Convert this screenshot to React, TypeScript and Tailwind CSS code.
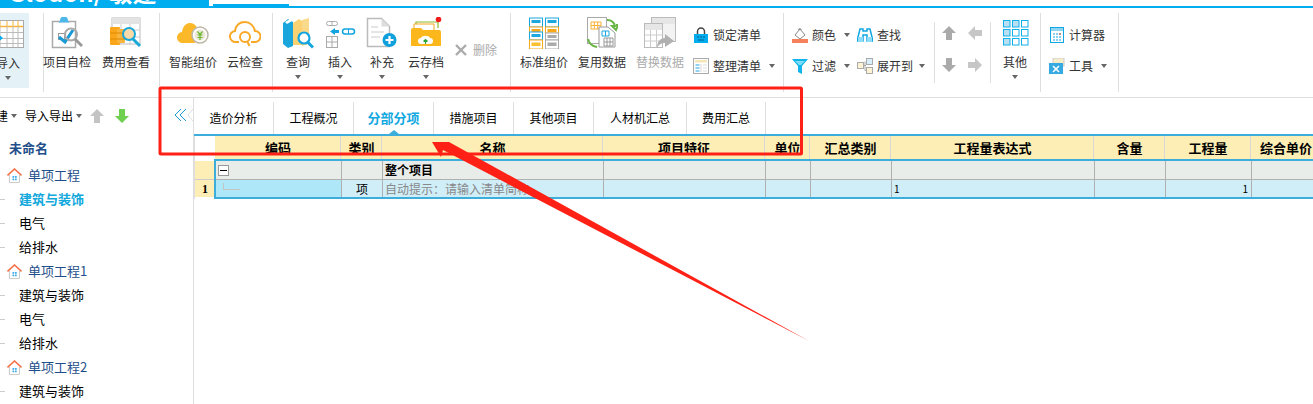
import { ReactNode } from 'react';

const Caret = ({ className = '' }: { className?: string }) => (
  <span className={`inline-block h-0 w-0 border-x-[3.5px] border-t-[4px] border-x-transparent border-t-[#666] ${className}`} />
);

const ImportIcon = () => (
  <svg width="32" height="32" viewBox="0 0 32 32" fill="none">
    <rect x="0.5" y="2.5" width="31" height="27" fill="#fff" stroke="#aaa" />
    <path d="M1 8.5h30" stroke="#f9b233" strokeWidth="1.5" />
    <path d="M1 14.5h30M1 20.5h30M1 25.5h30M8 8v21M15 8v21M21 8v21M26 8v21" stroke="#bbb" />
    <path d="M8 3v5M15 3v5M21 3v5M26 3v5" stroke="#f9b233" />
    <path d="M6 16l5 4-5 4z" fill="#00aeef" />
  </svg>
);

const SelfCheckIcon = () => (
  <svg width="32" height="32" viewBox="0 0 32 32" fill="none">
    <rect x="1.5" y="4.5" width="23" height="26" fill="#fff" stroke="#aaa" strokeWidth="1.5" />
    <path d="M9 3.5a4 4 0 018 0l1.5 2h-11z" fill="#4db8e8" />
    <rect x="7.5" y="16.5" width="6" height="6" stroke="#999" />
    <path d="M8 20l6 5 8-12" stroke="#1a9ad6" strokeWidth="3" />
    <circle cx="20" cy="17.5" r="6" stroke="#aaa" strokeWidth="2" />
    <path d="M24 22l7 7" stroke="#999" strokeWidth="3" />
  </svg>
);

const CostIcon = () => (
  <svg width="32" height="32" viewBox="0 0 32 32" fill="none">
    <rect x="2" y="1" width="28" height="26" fill="#fff" stroke="#bbb" />
    <rect x="2" y="1" width="28" height="6" fill="#e3e3e3" />
    <path d="M2 13h28M2 20h28M11 7v20M20 7v20" stroke="#ccc" />
    <rect x="0" y="10" width="10" height="18" rx="1" fill="#f9a61a" />
    <rect x="7" y="12" width="8" height="14" rx="1" fill="#f7b43e" />
    <path d="M0 16h15M0 22h15" stroke="#e08a00" />
    <circle cx="19" cy="17" r="6" fill="#f9d9a8" stroke="#19a8d8" strokeWidth="2" />
    <path d="M23 22l7 7" stroke="#19a8d8" strokeWidth="3" />
  </svg>
);

const SmartCloudIcon = () => (
  <svg width="32" height="32" viewBox="0 0 32 32" fill="none">
    <path d="M6 26a5.5 5.5 0 01-1-11c1-7 5-9 8-9 4 0 7 3 8 7l-3 13z" fill="#fbb829" />
    <circle cx="23" cy="18" r="8" fill="#fff" stroke="#bdb6a6" strokeWidth="1.5" />
    <circle cx="23" cy="18" r="5.5" fill="#ece7d9" />
    <path d="M20.5 14.5l2.5 3 2.5-3M20.5 18h5M20.5 20.5h5M23 17.5v5.5" stroke="#6ab82c" strokeWidth="1.2" />
  </svg>
);

const CloudCheckIcon = () => (
  <svg width="32" height="32" viewBox="0 0 32 32" fill="none">
    <path d="M10 25H7a5.5 5.5 0 01-1-11c1-6 5-9 10-9 5 0 9 4 10 9a5.5 5.5 0 010 11h-4" stroke="#f9a825" strokeWidth="2" />
    <circle cx="16" cy="20" r="5" stroke="#f9a825" strokeWidth="2" />
    <path d="M18.5 25l2 4" stroke="#f9a825" strokeWidth="2" />
  </svg>
);

const QueryIcon = () => (
  <svg width="32" height="32" viewBox="0 0 32 32" fill="none">
    <path d="M1 6l5-4 5 3v24l-5 2-5-4z" fill="#19a6dd" />
    <path d="M3 5l5-3 2 2-5 3z" fill="#fff" />
    <path d="M11 6l6-4 3 2v24H11z" fill="#fbd271" />
    <path d="M20 3l7-2v26l-7 2z" fill="#f9d98a" />
    <circle cx="22" cy="21" r="5.5" fill="#fff" stroke="#12a5e0" strokeWidth="2.2" />
    <path d="M26 25.5l5 5" stroke="#12a5e0" strokeWidth="3" />
  </svg>
);

const InsertIcon = () => (
  <svg width="32" height="32" viewBox="0 0 32 32" fill="none">
    <rect x="2.5" y="4.5" width="11" height="4" rx="2" stroke="#aaa" />
    <path d="M8 4v5" stroke="#aaa" />
    <rect x="2.5" y="19.5" width="11" height="11" stroke="#aaa" />
    <path d="M2 25h12M8 19v12" stroke="#aaa" />
    <path d="M6 14.5l5-3.5v2h4v3h-4v2z" fill="#12a5e0" />
    <rect x="18.5" y="12" width="12" height="5" rx="2.5" stroke="#12a5e0" strokeWidth="1.5" />
    <path d="M24.5 12v5" stroke="#12a5e0" />
  </svg>
);

const AddDocIcon = () => (
  <svg width="32" height="32" viewBox="0 0 32 32" fill="none">
    <path d="M1.5 1.5h14l8 8v20h-22z" fill="#fff" stroke="#bbb" strokeWidth="1.5" />
    <path d="M15.5 1.5v8h8z" fill="#ddd" />
    <path d="M5 10h7M5 15h13M5 20h9" stroke="#ddd" strokeWidth="1.5" />
    <circle cx="23.5" cy="23" r="7" fill="#10a0dc" />
    <path d="M23.5 19v8M19.5 23h8" stroke="#fff" strokeWidth="2.2" />
  </svg>
);

const CloudSaveIcon = () => (
  <svg width="32" height="32" viewBox="0 0 32 32" fill="none">
    <path d="M6 8V5h22v6" stroke="#8fb82c" strokeWidth="1.2" />
    <path d="M4 11V7h20v6" fill="#fff" stroke="#f5a623" strokeWidth="1" />
    <circle cx="28.5" cy="2.5" r="2.8" fill="#f21b1b" />
    <path d="M1 13a2 2 0 012-2h8l2 2h16a2 2 0 012 2v14H1z" fill="#fbb71c" />
    <path d="M11 27a3 3 0 010-6c1-3 8-3 9 0a3 3 0 010 6z" fill="#fff" />
    <path d="M15.5 27v-4M13.5 24.5l2-2 2 2" stroke="#2ba52b" strokeWidth="1.2" />
  </svg>
);

const StandardIcon = () => (
  <svg width="32" height="32" viewBox="0 0 32 32" fill="none">
    <rect x="1.5" y="1" width="13" height="9" fill="#fff" stroke="#1ca7e0" />
    <rect x="3.5" y="3" width="9" height="3" fill="#1ca7e0" />
    <rect x="1.5" y="10" width="13" height="11" fill="#fff" stroke="#f9a81a" />
    <rect x="3.5" y="12" width="9" height="3" fill="#f9a81a" />
    <rect x="1.5" y="15" width="13" height="8" fill="#fff" stroke="#1ca7e0" />
    <rect x="3.5" y="17" width="9" height="3" fill="#1ca7e0" />
    <rect x="1.5" y="23" width="13" height="9" fill="#fff" stroke="#f9a81a" />
    <rect x="3.5" y="25.5" width="9" height="3.5" fill="#fbc02d" />
    <rect x="17.5" y="1" width="13" height="9" fill="#fff" stroke="#1ca7e0" />
    <rect x="19.5" y="3" width="9" height="3" fill="#1ca7e0" />
    <rect x="17.5" y="10" width="13" height="6" fill="#fff" stroke="#f9a81a" />
    <rect x="19.5" y="12" width="9" height="3" fill="#f9a81a" />
    <rect x="17.5" y="16" width="13" height="7" fill="#fff" stroke="#aaa" />
    <rect x="19.5" y="18" width="9" height="3" fill="#aaa" />
    <rect x="17.5" y="23" width="13" height="9" fill="#fff" stroke="#aaa" />
    <rect x="19.5" y="25.5" width="9" height="3.5" fill="#aaa" />
  </svg>
);

const ReuseIcon = () => (
  <svg width="32" height="32" viewBox="0 0 32 32" fill="none">
    <rect x="1.5" y="0.5" width="19" height="26" fill="#fff" stroke="#aaa" />
    <path d="M5 5h10v7H5zM8.3 5v7M11.7 5v7M5 8.5h10" stroke="#f9b233" />
    <path d="M13 10h9l7 6v14H13z" fill="#fff" stroke="#999" />
    <path d="M16 14h7v5h-7zM19.5 14v5" stroke="#1ca7e0" />
    <path d="M18 21h9v8h-9zM21 21v8M24 21v8M18 25h9" stroke="#999" />
    <path d="M21 3c4 0 7 2 8 6l-3 0 4 4 2-5h-2" stroke="#68b543" strokeWidth="2" />
    <path d="M2 22c1 4 3 7 9 8" stroke="#68b543" strokeWidth="2" />
  </svg>
);

const ReplaceIcon = () => (
  <svg width="32" height="32" viewBox="0 0 32 32" fill="none">
    <rect x="7.5" y="0.5" width="24" height="24" fill="#f3f3f3" stroke="#bbb" />
    <rect x="8" y="1" width="23" height="6" fill="#e6e6e6" />
    <rect x="0.5" y="6.5" width="18" height="24" fill="#fff" stroke="#bbb" />
    <rect x="1" y="7" width="17" height="6" fill="#e6e6e6" />
    <path d="M1 18h17M1 24h17M6.5 13v17M12.5 13v17" stroke="#ccc" />
    <path d="M13 31c0-7 4-10 8-10v-4l9 7-9 6v-4c-3 0-6 1-8 5z" fill="#b0b0b0" />
  </svg>
);

const LockIcon = () => (
  <svg width="16" height="16" viewBox="0 0 16 16" fill="none">
    <path d="M4.5 7V4.5a3.5 3.5 0 017 0V7" stroke="#444" strokeWidth="1.5" />
    <rect x="1" y="7" width="14" height="9" fill="#00aeef" />
    <path d="M4 10h2M7 10h2M10 10h2M5 13h6" stroke="#0a5f86" />
  </svg>
);

const OrganizeIcon = () => (
  <svg width="16" height="16" viewBox="0 0 16 16" fill="none">
    <rect x="0.5" y="0.5" width="15" height="15" fill="#fff" stroke="#aaa" />
    <rect x="2" y="2" width="12" height="2.5" fill="#f5e6b8" />
    <path d="M2.5 7h4M2.5 10h4M2.5 13h4" stroke="#1ca7e0" />
    <path d="M8 6v8M10 7h4M10 10h4M10 13h4" stroke="#ddd" strokeWidth="1.2" />
  </svg>
);

const BucketIcon = () => (
  <svg width="16" height="16" viewBox="0 0 16 16" fill="none">
    <path d="M3 8l5-6 5 6-5 4z" fill="#fff" stroke="#888" />
    <path d="M6 3c1-2 3-2 3 0" stroke="#888" />
    <rect x="0" y="12" width="16" height="4" fill="#f4815a" />
  </svg>
);

const BinocularIcon = () => (
  <svg width="16" height="16" viewBox="0 0 16 16" fill="none">
    <path d="M3 2h3v2h4V2h3l3 12H10V8H6v6H0z" fill="#fff" stroke="#10a5e4" strokeWidth="1.5" />
    <path d="M1 10h5v5H1zM10 10h5v5h-5z" fill="#8fdcf8" />
  </svg>
);

const FilterIcon = () => (
  <svg width="16" height="16" viewBox="0 0 16 16" fill="none">
    <path d="M0 1h16L10 8v8l-4-2V8z" fill="#10b3ea" />
    <path d="M3 3h10L9 7H7z" fill="#7bdcf7" />
  </svg>
);

const ExpandIcon = () => (
  <svg width="16" height="16" viewBox="0 0 16 16" fill="none">
    <rect x="0.5" y="4.5" width="6" height="6" fill="#fdf3d2" stroke="#aaa" />
    <rect x="9.5" y="0.5" width="6" height="6" fill="#d8eef8" stroke="#aaa" />
    <rect x="9.5" y="9.5" width="6" height="6" fill="#fdf3d2" stroke="#aaa" />
    <path d="M7 7.5h2M8 3.5v9h1" stroke="#aaa" />
  </svg>
);

const BlockArrow = ({ dir, color = '#aaa' }: { dir: 'up' | 'down' | 'left' | 'right'; color?: string }) => {
  const rotate = { up: '', down: 'rotate-180', left: '-rotate-90', right: 'rotate-90' }[dir];
  return (
    <svg width="16" height="16" viewBox="0 0 16 16" className={rotate}>
      <path d="M8 1l7 7h-4v7H5V8H1z" fill={color} />
    </svg>
  );
};

const GridIcon = () => (
  <svg width="32" height="32" viewBox="0 0 32 32" fill="#bfe3f5" stroke="#10b0ea" strokeWidth="1">
    {[3, 12, 21].map((y) =>
      [4, 13, 22].map((x) => (
        <rect key={`${x}-${y}`} x={x + 0.5} y={y + 0.5} width="6.5" height="6.5" fill={x + y < 30 && x !== 22 && !(y === 12 && x === 13) ? '#b9dff3' : '#fff'} />
      )),
    )}
  </svg>
);

const CalcIcon = () => (
  <svg width="16" height="16" viewBox="0 0 16 16" fill="none">
    <rect x="1.5" y="0.5" width="13" height="15" fill="#fff" stroke="#10a5e4" />
    <rect x="2" y="1" width="12" height="3" fill="#8fd6f3" />
    <path d="M4 7h2M7 7h2M10 7h2M4 10h2M7 10h2M4 13h2M7 13h2M10 10h2M10 13h2" stroke="#10a5e4" />
    <path d="M10 7h2" stroke="#f24a2a" />
  </svg>
);

const ToolIcon = () => (
  <svg width="16" height="16" viewBox="0 0 16 16" fill="none">
    <rect x="4" y="0" width="11" height="8" fill="#f7ecc9" stroke="#ccc" />
    <rect x="0" y="5" width="14" height="11" fill="#35a9e1" />
    <path d="M4 8l6 6M10 8l-6 6" stroke="#fff" strokeWidth="1.6" />
  </svg>
);

const HouseIcon = () => (
  <svg width="15" height="15" viewBox="0 0 15 15" fill="none">
    <path d="M2.5 7v7.5h10V7" fill="#fff" stroke="#ccc" />
    <path d="M0.5 7.5L7.5 1l7 6.5" stroke="#f4734d" strokeWidth="1.6" />
    <path d="M5.5 8h1.7v1.7H5.5zM8 8h1.7v1.7H8zM5.5 10.5h1.7v1.7H5.5zM8 10.5h1.7v1.7H8z" fill="#3aa9e8" />
  </svg>
);

const Divider = () => <div className="h-[79px] w-px shrink-0 bg-[#dedede]" />;
const ShortDivider = () => <div className="mt-[9px] h-[61px] w-px shrink-0 bg-[#dedede]" />;

const BigButton = ({ icon, label, caret, muted, className = '' }: { icon: ReactNode; label: string; caret?: boolean; muted?: boolean; className?: string }) => (
  <div className={`flex w-10 shrink-0 flex-col items-center pt-1 ${className}`}>
    {icon}
    <span className={`mt-[5px] h-4 whitespace-nowrap text-xs leading-4 ${muted ? 'text-[#aaa]' : 'text-[#333]'}`}>{label}</span>
    {caret && <Caret className="mt-[5px]" />}
  </div>
);

const SmallButton = ({ icon, label, caretClass }: { icon: ReactNode; label: string; caretClass?: string }) => (
  <div className="flex h-4 items-center gap-1 text-xs leading-4 text-[#333]">
    {icon}
    <span className="whitespace-nowrap">{label}</span>
    {caretClass && <Caret className={caretClass} />}
  </div>
);

const Ribbon = () => (
  <div className="flex h-[90px] border-b border-[#dedede] pt-[5px]">
    <div className="w-[43px] shrink-0 overflow-hidden">
      <div className="-ml-[13px] h-[75px] w-[42px] bg-[#e4f2f8] pt-px">
        <BigButton icon={<ImportIcon />} label="导入" caret className="w-[42px]" />
      </div>
    </div>
    <Divider />
    <div className="flex w-[115px] shrink-0">
      <BigButton icon={<SelfCheckIcon />} label="项目自检" className="ml-[3px]" />
      <BigButton icon={<CostIcon />} label="费用查看" className="ml-[19px]" />
    </div>
    <Divider />
    <div className="flex w-[112px] shrink-0">
      <BigButton icon={<SmartCloudIcon />} label="智能组价" className="ml-[13px]" />
      <BigButton icon={<CloudCheckIcon />} label="云检查" className="ml-3" />
    </div>
    <Divider />
    <div className="flex w-[237px] shrink-0">
      <BigButton icon={<QueryIcon />} label="查询" caret className="ml-[5px]" />
      <BigButton icon={<InsertIcon />} label="插入" caret className="ml-[2px]" />
      <BigButton icon={<AddDocIcon />} label="补充" caret className="ml-[2px]" />
      <BigButton icon={<CloudSaveIcon />} label="云存档" caret className="ml-1" />
      <div className="mt-[29px] ml-[9px] flex h-4 items-center gap-[6px] text-xs text-[#aaa]">
        <svg width="12" height="12" viewBox="0 0 12 12">
          <path d="M1 1l10 10M11 1L1 11" stroke="#aaa" strokeWidth="2.4" />
        </svg>
        <span className="whitespace-nowrap">删除</span>
      </div>
    </div>
    <Divider />
    <div className="flex w-[272px] shrink-0">
      <BigButton icon={<StandardIcon />} label="标准组价" className="ml-[13px]" />
      <BigButton icon={<ReuseIcon />} label="复用数据" className="ml-[18px]" />
      <BigButton icon={<ReplaceIcon />} label="替换数据" muted className="ml-[18px]" />
      <div className="ml-[13px] flex flex-col gap-[15px] pt-[14px]">
        <SmallButton icon={<LockIcon />} label="锁定清单" />
        <SmallButton icon={<OrganizeIcon />} label="整理清单" caretClass="ml-1" />
      </div>
    </div>
    <Divider />
    <div className="flex w-[150px] shrink-0 pl-2">
      <div className="flex flex-col gap-[15px] pt-[14px]">
        <SmallButton icon={<BucketIcon />} label="颜色" caretClass="ml-1" />
        <SmallButton icon={<FilterIcon />} label="过滤" caretClass="ml-1" />
      </div>
      <div className="ml-[7px] flex flex-col gap-[15px] pt-[14px]">
        <SmallButton icon={<BinocularIcon />} label="查找" />
        <SmallButton icon={<ExpandIcon />} label="展开到" caretClass="ml-[2px]" />
      </div>
    </div>
    <ShortDivider />
    <div className="grid w-[55px] shrink-0 grid-cols-[16px_16px] content-start gap-x-[10px] gap-y-4 pt-3 pl-[6px]">
      <BlockArrow dir="up" />
      <BlockArrow dir="left" color="#c6c6c6" />
      <BlockArrow dir="down" />
      <BlockArrow dir="right" color="#c6c6c6" />
    </div>
    <ShortDivider />
    <div className="flex w-[49px] shrink-0">
      <BigButton icon={<GridIcon />} label="其他" caret className="ml-1" />
    </div>
    <Divider />
    <div className="flex w-[77px] shrink-0 flex-col gap-[15px] pt-[14px] pl-2">
      <SmallButton icon={<CalcIcon />} label="计算器" />
      <SmallButton icon={<ToolIcon />} label="工具" caretClass="ml-1" />
    </div>
    <Divider />
  </div>
);

const tree = [
  { label: '单项工程', group: true },
  { label: '建筑与装饰', active: true },
  { label: '电气' },
  { label: '给排水' },
  { label: '单项工程1', group: true },
  { label: '建筑与装饰' },
  { label: '电气' },
  { label: '给排水' },
  { label: '单项工程2', group: true },
  { label: '建筑与装饰' },
];

const Sidebar = () => (
  <div className="w-[194px] shrink-0 overflow-hidden border-r border-[#dedede]">
    <div className="flex h-[38px] items-center pb-[2px] text-xs text-black">
      <span className="-ml-1 whitespace-nowrap">建</span>
      <Caret className="ml-[3px]" />
      <span className="ml-2 whitespace-nowrap">导入导出</span>
      <Caret className="ml-[3px]" />
      <span className="ml-[7px]">
        <BlockArrow dir="up" color="#c4c4c4" />
      </span>
      <span className="ml-[9px]">
        <BlockArrow dir="down" color="#6fcf4f" />
      </span>
      <svg width="20" height="18" viewBox="0 0 20 18" fill="none" className="relative z-10 ml-[44px] shrink-0">
        <path d="M7 2L1 8l6 6M12 2L6 8l6 6" stroke="#1a9ad6" />
        <path d="M19 2l-5 6 5 6" fill="#fff" stroke="#dedede" />
      </svg>
    </div>
    <div className="flex h-6 items-center pl-[9px] text-[13px] font-bold text-[#1f4f8a]">未命名</div>
    <div className="mt-[3px]">
      {tree.map((row, i) =>
        row.group ? (
          <div key={i} className="flex h-6 items-center gap-[6px] pl-[7px] text-[13px] text-[#1f4f8a]">
            <HouseIcon />
            <span>{row.label}</span>
          </div>
        ) : (
          <div key={i} className={`flex h-6 items-center text-[13px] ${row.active ? 'font-bold text-[#12a8dc]' : 'text-black'}`}>
            <span className="h-px w-[5px] bg-[#ccc]" />
            <span className="ml-[14px]">{row.label}</span>
          </div>
        ),
      )}
    </div>
  </div>
);

const tabs = [
  { label: '造价分析', w: 'w-20' },
  { label: '工程概况', w: 'w-20' },
  { label: '分部分项', w: 'w-20', active: true },
  { label: '措施项目', w: 'w-20' },
  { label: '其他项目', w: 'w-20' },
  { label: '人材机汇总', w: 'w-[93px]' },
  { label: '费用汇总', w: 'w-[79px]' },
];

const Tabs = () => (
  <div className="flex h-[38px] border-b-2 border-[#3daedb] pt-1">
    {tabs.map((t) => (
      <div
        key={t.label}
        className={`relative flex items-center justify-center border-r border-[#dedede] ${t.w} ${t.active ? 'text-[13px] font-bold text-[#12a8e0]' : 'text-xs text-black'}`}
      >
        {t.label}
        {t.active && <span className="absolute bottom-0 left-1/2 h-0 w-0 -translate-x-1/2 border-x-[5px] border-b-[4px] border-x-transparent border-b-[#3daedb]" />}
      </div>
    ))}
  </div>
);

const columns = [
  { label: '编码', w: 'w-[126px]' },
  { label: '类别', w: 'w-[41px]' },
  { label: '名称', w: 'w-[221px]' },
  { label: '项目特征', w: 'w-[162px]' },
  { label: '单位', w: 'w-[45px]' },
  { label: '汇总类别', w: 'w-[81px]' },
  { label: '工程量表达式', w: 'w-[203px]' },
  { label: '含量', w: 'w-[71px]' },
  { label: '工程量', w: 'w-[86px]' },
  { label: '综合单价', w: 'w-[70px]' },
];

const Table = () => (
  <div className="overflow-hidden">
    <div className="flex h-[23px]">
      <div className="w-[21px] shrink-0 border-l border-[#dedede]" />
      {columns.map((c) => (
        <div key={c.label} className={`flex shrink-0 items-center justify-center border-r border-[#d8d8d8] bg-[#fdeeb5] pt-px pl-px text-[13px] font-bold whitespace-nowrap text-black ${c.w}`}>
          {c.label}
        </div>
      ))}
    </div>
    <div className="flex">
      <div className="w-[21px] shrink-0 border-l border-[#dedede] pt-[2px]">
        <div className="h-[19px] border-b border-[#ccc] bg-[#fdeeb5]" />
        <div className="flex h-[17px] items-center justify-center bg-[#fdeeb5] font-['Liberation_Serif',serif] text-xs font-bold text-black">1</div>
      </div>
      <div className="-ml-px border-y-2 border-l-2 border-[#3daedb]">
        <div className="flex h-[19px] border-b border-[#b0b0b0] bg-[#e8ede9]">
          {columns.map((c, i) => (
            <div key={c.label} className={`flex shrink-0 items-center border-r border-[#b0b0b0] ${c.w} ${i === 0 ? 'pl-[2px]' : ''}`}>
              {i === 0 && (
                <span className="relative flex h-[11px] w-[11px] items-center justify-center border border-[#999] bg-white">
                  <span className="h-px w-[7px] bg-black" />
                </span>
              )}
              {i === 2 && <span className="pl-[2px] text-xs font-bold text-black">整个项目</span>}
            </div>
          ))}
        </div>
        <div className="flex h-[17px] bg-[#d0eef8]">
          {columns.map((c, i) => (
            <div key={c.label} className={`flex shrink-0 items-center border-r border-[#b0b0b0] text-xs ${c.w} ${i === 0 ? 'bg-[#aee8f8] pl-[7px]' : ''} ${i === 1 ? 'justify-center text-black' : ''} ${i === 2 ? 'pl-[2px] text-[#888]' : ''} ${i === 6 ? 'pl-[2px] text-[10px] text-black' : ''} ${i === 8 ? 'justify-end pr-[3px] text-[10px] text-black' : ''}`}>
              {i === 0 && <span className="mb-[5px] h-[7px] w-[17px] border-b border-l border-[#c4c4c4]" />}
              {i === 1 && '项'}
              {i === 2 && '自动提示：请输入清单简称'}
              {(i === 6 || i === 8) && '1'}
            </div>
          ))}
        </div>
      </div>
    </div>
  </div>
);

const Overlay = () => (
  <svg width="1313" height="404" viewBox="0 0 1313 404" fill="none" className="pointer-events-none absolute top-0 left-0 z-20">
    <rect x="160" y="88" width="641.5" height="66" rx="1" stroke="#ff2115" strokeWidth="3" />
    <path d="M432 142L449 142L809 341L443 150L441 157Z" fill="#ff2115" />
  </svg>
);

export default function App() {
  return (
    <div className="relative h-[404px] w-[1313px] overflow-hidden bg-white font-['Noto_Sans_CJK_SC','Liberation_Sans',sans-serif]">
      <div className="flex h-[6px] bg-white">
        <div className="h-[6px] w-[209px] overflow-hidden bg-[#00aeef] pl-2">
          <div className="-mt-5 text-[24px] leading-[24px] font-bold whitespace-nowrap text-white">Glodon/ 敏建</div>
        </div>
        <div className="mt-1 ml-1 h-[2px] w-[76px] bg-[#00aeef]" />
      </div>
      <div className="h-[2px] bg-[#00aeef]" />
      <Ribbon />
      <div className="flex h-[306px]">
        <Sidebar />
        <div className="min-w-0 flex-1">
          <Tabs />
          <Table />
        </div>
      </div>
      <Overlay />
    </div>
  );
}
